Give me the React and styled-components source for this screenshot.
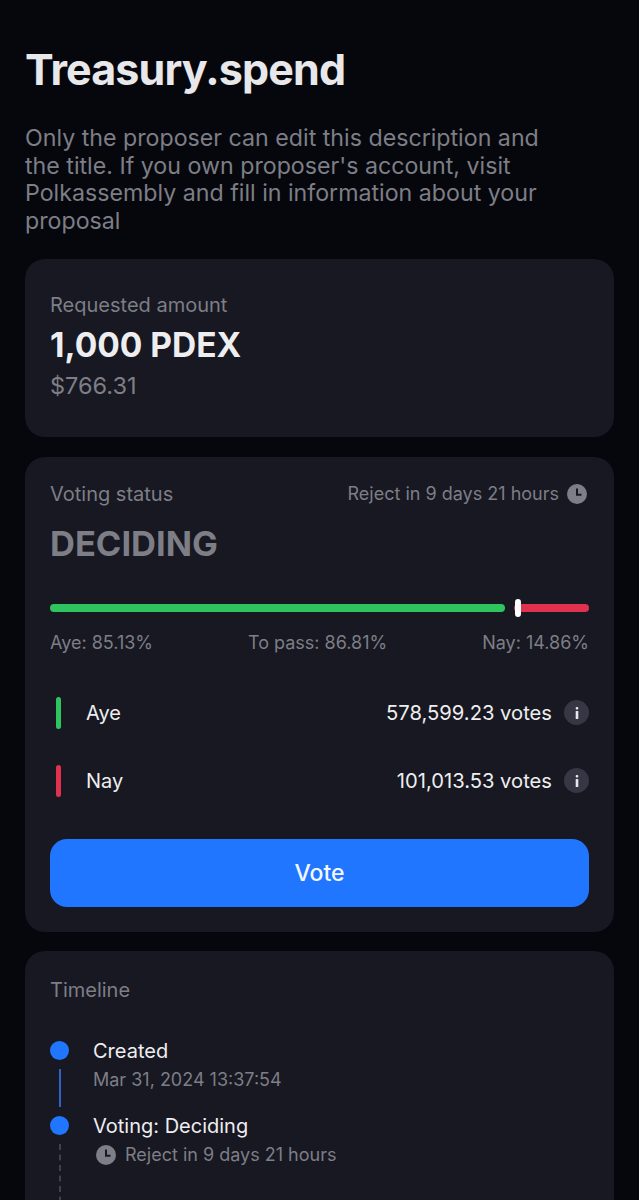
import React from 'react'
import styled, { createGlobalStyle } from 'styled-components'

const colors = {
  page: '#06070d',
  card: '#171821',
  muted: '#7d7e86',
  text: '#eeeef0',
  blue: '#2176ff',
  green: '#2ec55f',
  red: '#e0314f',
}

const GlobalStyle = createGlobalStyle`
  html, body {
    margin: 0;
    height: 1200px;
    overflow: hidden;
    background: ${colors.page};
  }
  body {
    font-family: Inter, "Liberation Sans", sans-serif;
  }
`

const Page = styled.div`
  display: flex;
  flex-direction: column;
  height: 1200px;
  box-sizing: border-box;
  padding: 43px 25px 0;
  overflow: hidden;
`

const Title = styled.h1`
  margin: 0;
  font-size: 43px;
  line-height: 52px;
  font-weight: 700;
  letter-spacing: -0.85px;
  color: #e8e8ea;
`

const Description = styled.p`
  max-width: 530px;
  margin: 30px 0 24px;
  font-size: 23.2px;
  line-height: 27.5px;
  color: ${colors.muted};
`

const Card = styled.section`
  flex-shrink: 0;
  background: ${colors.card};
  border-radius: 20px;
  padding: ${props => props.padding || '25px'};
  margin-bottom: 19.5px;
`

const Label = styled.div`
  font-size: 20px;
  line-height: 24px;
  color: ${colors.muted};
`

const Amount = styled.div`
  margin-top: 8px;
  font-size: 33.5px;
  line-height: 40px;
  font-weight: 700;
  color: ${colors.text};
`

const Fiat = styled.div`
  margin-top: 7px;
  font-size: 23.5px;
  line-height: 28px;
  color: ${colors.muted};
`

const StatusHeader = styled.div`
  display: flex;
  justify-content: space-between;
  align-items: center;
`

const Countdown = styled.div`
  display: flex;
  align-items: center;
  gap: 8px;
  padding-right: 2px;
  font-size: 18px;
  line-height: 24px;
  color: ${colors.muted};
`

const StepCountdown = styled(Countdown)`
  gap: 9px;
  margin-left: 3px;
`

const Status = styled.div`
  margin-top: 18px;
  font-size: 34.5px;
  line-height: 40px;
  font-weight: 700;
  color: ${colors.muted};
`

const Track = styled.div`
  position: relative;
  display: flex;
  justify-content: space-between;
  margin-top: 40px;
  height: 8px;
`

const Segment = styled.div`
  height: 8px;
  border-radius: 4px;
  background: ${props => props.color};
`

const Threshold = styled.div`
  position: absolute;
  left: 465px;
  top: -5px;
  width: 6px;
  height: 18px;
  border-radius: 3px;
  background: #fff;
`

const Percentages = styled.div`
  display: flex;
  justify-content: space-between;
  margin-top: 19px;
  font-size: 18px;
  line-height: 24px;
  color: ${colors.muted};
`

const VoteRow = styled.div`
  display: flex;
  align-items: center;
  height: 32px;
  margin-top: ${props => props.gap}px;
  padding-left: 6px;
`

const VoteBar = styled.span`
  width: 5px;
  height: 32px;
  border-radius: 3px;
  background: ${props => props.color};
`

const VoteName = styled.span`
  margin-left: 25px;
  font-size: 20px;
  color: ${colors.text};
`

const VoteCount = styled.span`
  margin-left: auto;
  font-size: 20.2px;
  color: ${colors.text};
`

const InfoBadge = styled.span`
  display: flex;
  align-items: center;
  justify-content: center;
  width: 25px;
  height: 25px;
  margin-left: 12px;
  border-radius: 50%;
  background: #363745;
  color: #e8e8ec;
`

const VoteButton = styled.button`
  display: block;
  width: 100%;
  height: 68px;
  margin-top: 42px;
  border: 0;
  border-radius: 17px;
  background: ${colors.blue};
  color: #f3f7ff;
  font-family: inherit;
  font-size: 23px;
  font-weight: 500;
`

const TimelineList = styled.div`
  margin-top: 36px;
`

const Step = styled.div`
  display: grid;
  grid-template-columns: 19px 1fr;
  column-gap: 24px;
`

const Rail = styled.div`
  display: flex;
  flex-direction: column;
  align-items: center;
  padding-top: 3px;
`

const Dot = styled.span`
  flex-shrink: 0;
  width: 19px;
  height: 19px;
  border-radius: 50%;
  background: ${colors.blue};
`

const Connector = styled.span`
  height: ${props => props.height}px;
  margin-top: 9px;
  border-left: 2px ${props => (props.dashed ? 'dashed #3f4049' : 'solid #2f62c4')};
`

const StepBody = styled.div`
  padding-bottom: 21px;
`

const StepTitle = styled.div`
  font-size: 20px;
  line-height: 26px;
  color: ${colors.text};
`

const StepMeta = styled.div`
  margin-top: 4px;
  font-size: 18px;
  line-height: 24px;
  color: ${colors.muted};
`

const ClockIcon = () => (
  <svg width="20" height="20" viewBox="0 0 20 20">
    <circle cx="10" cy="10" r="10" fill="#7d7e86" />
    <path d="M10 4.5V10.8H14.5" fill="none" stroke="#171821" strokeWidth="2" />
  </svg>
)

const InfoIcon = () => (
  <svg width="4" height="12" viewBox="0 0 4 12">
    <rect x="0.7" y="0" width="2.6" height="2.4" rx="1" fill="currentColor" />
    <rect x="0.7" y="4" width="2.6" height="8" rx="0.6" fill="currentColor" />
  </svg>
)

const votes = [
  { name: 'Aye', count: '578,599.23 votes', color: colors.green, gap: 42 },
  { name: 'Nay', count: '101,013.53 votes', color: colors.red, gap: 36 },
]

const App = () => (
  <Page>
    <GlobalStyle />
    <Title>Treasury.spend</Title>
    <Description>
      Only the proposer can edit this description and the title. If you own proposer's account, visit
      Polkassembly and fill in information about your proposal
    </Description>

    <Card padding="34px 25px 37px">
      <Label>Requested amount</Label>
      <Amount>1,000 PDEX</Amount>
      <Fiat>$766.31</Fiat>
    </Card>

    <Card padding="25px">
      <StatusHeader>
        <Label>Voting status</Label>
        <Countdown>
          Reject in 9 days 21 hours
          <ClockIcon />
        </Countdown>
      </StatusHeader>
      <Status>DECIDING</Status>
      <Track>
        <Segment color={colors.green} style={{ width: `${(455 / 539) * 100}%` }} />
        <Segment color={colors.red} style={{ width: `${(75 / 539) * 100}%` }} />
        <Threshold />
      </Track>
      <Percentages>
        <span>Aye: 85.13%</span>
        <span>To pass: 86.81%</span>
        <span>Nay: 14.86%</span>
      </Percentages>
      {votes.map(vote => (
        <VoteRow gap={vote.gap} key={vote.name}>
          <VoteBar color={vote.color} />
          <VoteName>{vote.name}</VoteName>
          <VoteCount>{vote.count}</VoteCount>
          <InfoBadge>
            <InfoIcon />
          </InfoBadge>
        </VoteRow>
      ))}
      <VoteButton>Vote</VoteButton>
    </Card>

    <Card padding="27px 25px 0">
      <Label>Timeline</Label>
      <TimelineList>
        <Step>
          <Rail>
            <Dot />
            <Connector height={38} />
          </Rail>
          <StepBody>
            <StepTitle>Created</StepTitle>
            <StepMeta>Mar 31, 2024 13:37:54</StepMeta>
          </StepBody>
        </Step>
        <Step>
          <Rail>
            <Dot />
            <Connector height={90} dashed />
          </Rail>
          <StepBody>
            <StepTitle>Voting: Deciding</StepTitle>
            <StepMeta>
              <StepCountdown>
                <ClockIcon />
                Reject in 9 days 21 hours
              </StepCountdown>
            </StepMeta>
          </StepBody>
        </Step>
      </TimelineList>
    </Card>
  </Page>
)

export default App
